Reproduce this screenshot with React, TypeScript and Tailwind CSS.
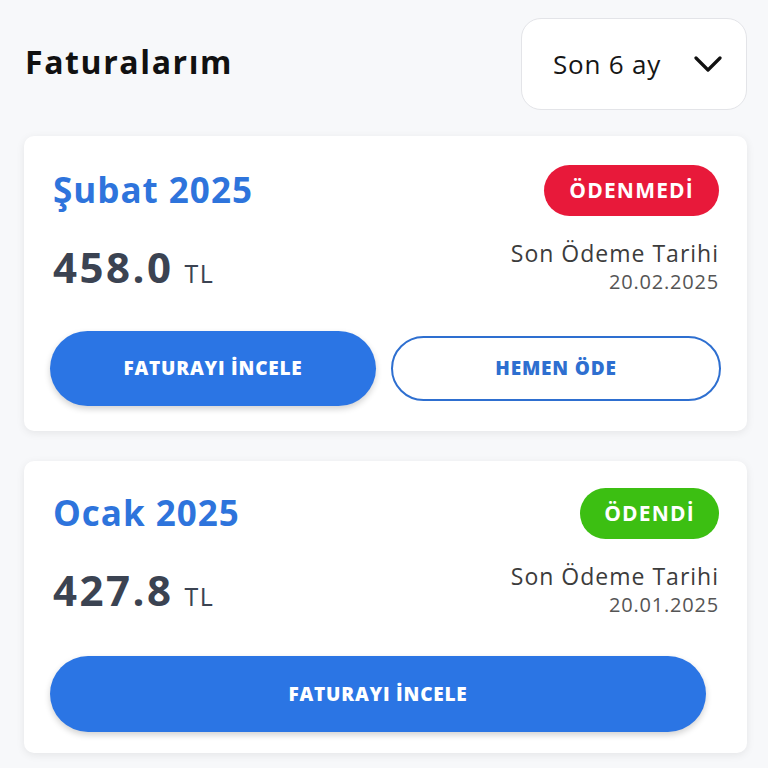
import React from "react";

const font = { fontFamily: '"Open Sans", "Noto Sans", sans-serif' };

function Chevron() {
  return (
    <svg width="28" height="18" viewBox="0 0 28 18" fill="none">
      <path d="M2 3 L14 15 L26 3" stroke="#111" strokeWidth="3.2" strokeLinecap="round" strokeLinejoin="round" />
    </svg>
  );
}

export default function App() {
  return (
    <div className="w-[768px] h-[768px] overflow-hidden bg-[#f7f8fa] pl-[24px] pr-[21px]" style={font}>
      <div className="flex items-center justify-between pt-[18px]">
        <h1 className="pl-[1px] pb-[4px] text-[32px] font-bold text-[#111] tracking-[1.6px]">Faturalarım</h1>
        <div className="flex h-[92px] w-[226px] items-center justify-between rounded-[20px] border border-[#e3e4e8] bg-white pl-[31px] pr-[24px]">
          <span className="text-[26px] tracking-[0.8px] text-[#161616]">Son 6 ay</span>
          <Chevron />
        </div>
      </div>

      <div className="mt-[26px] flex flex-col gap-[30px]">
        <div className="h-[295px] rounded-[10px] bg-white pl-[29px] pr-[28px] pt-[29px] shadow-[0_2px_8px_rgba(0,0,0,0.08)]">
          <div className="flex h-[51px] items-center justify-between">
            <span className="text-[35px] font-bold tracking-[1px] text-[#2e74dc]">Şubat 2025</span>
            <span className="flex h-[51px] items-center rounded-full bg-[#e8193a] px-[25px] text-[21px] font-bold tracking-[1.2px] text-white">ÖDENMEDİ</span>
          </div>
          <div className="mt-[22px] flex items-center justify-between">
            <div className="flex items-baseline gap-[11px] pt-[4px]">
              <span className="text-[42px] font-bold tracking-[2.5px] text-[#3b4352] leading-none">458.0</span>
              <span className="text-[25px] tracking-[1.5px] text-[#3b4352]">TL</span>
            </div>
            <div className="flex flex-col items-end">
              <span className="text-[23px] leading-[30px] tracking-[1px] text-[#3c3c3c]">Son Ödeme Tarihi</span>
              <span className="text-[20px] leading-[28px] tracking-[0.8px] text-[#555]">20.02.2025</span>
            </div>
          </div>
          <div className="mt-[35px] ml-[-3px] mr-[-2px] flex items-center gap-[15px]">
            <button className="h-[75px] flex-1 rounded-full bg-[#2b75e4] text-[19px] font-extrabold tracking-[0.8px] text-white shadow-[0_3px_6px_rgba(0,0,0,0.18)]">FATURAYI İNCELE</button>
            <button className="h-[65px] flex-1 rounded-full border-2 border-[#2e6fd0] bg-white text-[19px] font-extrabold tracking-[0.8px] text-[#2e6fd0]">HEMEN ÖDE</button>
          </div>
        </div>

        <div className="h-[292px] rounded-[10px] bg-white pl-[29px] pr-[28px] pt-[27px] shadow-[0_2px_8px_rgba(0,0,0,0.08)]">
          <div className="flex h-[51px] items-center justify-between">
            <span className="text-[35px] font-bold tracking-[1px] text-[#2e74dc]">Ocak 2025</span>
            <span className="flex h-[51px] items-center rounded-full bg-[#3cbf12] px-[24px] text-[21px] font-bold tracking-[1.2px] text-white">ÖDENDİ</span>
          </div>
          <div className="mt-[22px] flex items-center justify-between">
            <div className="flex items-baseline gap-[11px] pt-[4px]">
              <span className="text-[42px] font-bold tracking-[2.5px] text-[#3b4352] leading-none">427.8</span>
              <span className="text-[25px] tracking-[1.5px] text-[#3b4352]">TL</span>
            </div>
            <div className="flex flex-col items-end">
              <span className="text-[23px] leading-[30px] tracking-[1px] text-[#3c3c3c]">Son Ödeme Tarihi</span>
              <span className="text-[20px] leading-[28px] tracking-[0.8px] text-[#555]">20.01.2025</span>
            </div>
          </div>
          <div className="mt-[37px] ml-[-3px] mr-[13px] flex">
            <button className="h-[76px] flex-1 rounded-full bg-[#2b75e4] text-[19px] font-extrabold tracking-[0.8px] text-white shadow-[0_3px_6px_rgba(0,0,0,0.18)]">FATURAYI İNCELE</button>
          </div>
        </div>
      </div>
    </div>
  );
}
